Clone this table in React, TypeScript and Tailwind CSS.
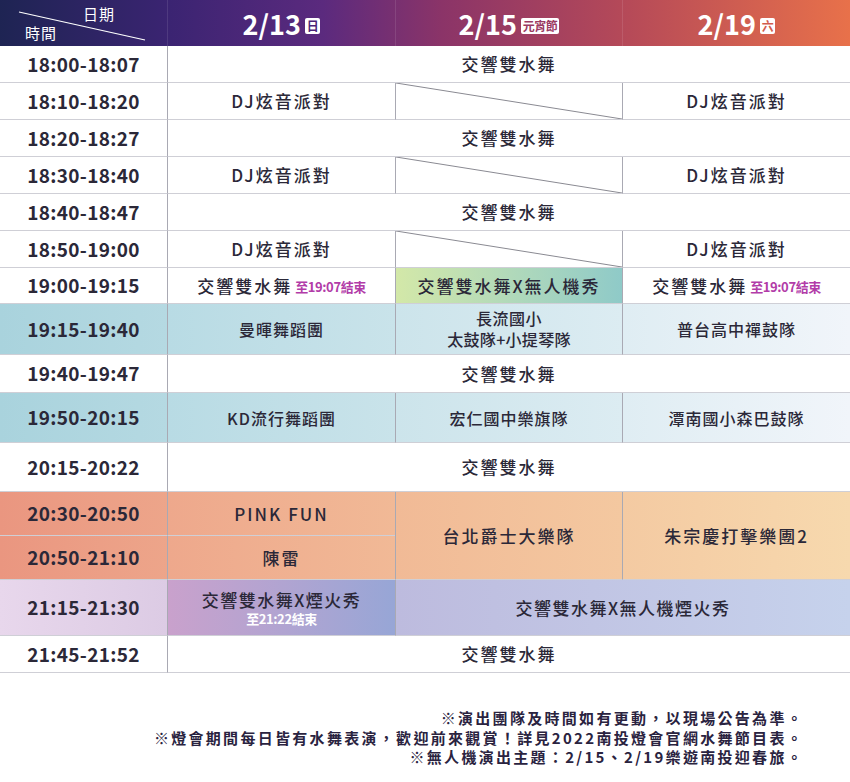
import React from "react";

const ink = "text-[#2b2838]";

function Diagonal() {
  return (
    <svg className="absolute inset-0 h-full w-full" viewBox="0 0 100 100" preserveAspectRatio="none">
      <line x1="0" y1="0" x2="100" y2="100" stroke="#8a8a92" strokeWidth="1" vectorEffect="non-scaling-stroke" />
    </svg>
  );
}

function Time({ t, bg = "" }: { t: string; bg?: string }) {
  return (
    <div className={`flex items-center justify-center border-b border-[#cfcfd6] text-[19px] font-bold tracking-[0.3px] ${ink} ${bg}`}>
      {t}
    </div>
  );
}

function Cell({
  children,
  span = "",
  bg = "",
  size = "show",
}: {
  children?: React.ReactNode;
  span?: string;
  bg?: string;
  size?: "show" | "name";
}) {
  const text = size === "show" ? "text-[17px] tracking-[2px]" : "text-[16px] tracking-[1px]";
  return (
    <div
      className={`relative flex flex-col items-center justify-center border-b border-l border-b-[#cfcfd6] border-l-[#a9a9b3] font-medium leading-[20px] ${text} ${ink} ${span} ${bg}`}
    >
      {children}
    </div>
  );
}

function Water() {
  return <Cell span="col-span-3">交響雙水舞</Cell>;
}

function DjRow({ t }: { t: string }) {
  return (
    <>
      <Time t={t} />
      <Cell>DJ炫音派對</Cell>
      <Cell>
        <Diagonal />
      </Cell>
      <Cell>DJ炫音派對</Cell>
    </>
  );
}

function Until({ text }: { text: string }) {
  return (
    <div className="flex items-center">
      <span>交響雙水舞</span>
      <span className="ml-[3px] mt-[3px] text-[13px] font-bold tracking-[-0.4px] text-[#b23ca8]">{text}</span>
    </div>
  );
}

function DateHead({ d, badge, color }: { d: string; badge: string; color: string }) {
  return (
    <div className="flex items-center justify-center border-l border-white/10">
      <span className="text-[27px] font-bold leading-none text-white">{d}</span>
      <span
        className={`ml-[4px] mt-[5px] rounded-[2px] bg-white px-[2px] py-[1px] text-[12px] font-bold leading-[14px] tracking-[-0.5px] ${color}`}
      >
        {badge}
      </span>
    </div>
  );
}

export default function App() {
  const blue = [
    "bg-gradient-to-r from-[#a9d3dd] to-[#b5d9e2]",
    "bg-gradient-to-r from-[#b8dbe4] to-[#c9e3ea]",
    "bg-gradient-to-r from-[#cce4eb] to-[#dcecf2]",
    "bg-gradient-to-r from-[#dfedf3] to-[#f1f5fa]",
  ];
  const orange = [
    "bg-gradient-to-r from-[#ea9680] to-[#eda58a]",
    "bg-gradient-to-r from-[#eea88c] to-[#f1b996]",
    "bg-gradient-to-r from-[#f1ba96] to-[#f4c8a0]",
    "bg-gradient-to-r from-[#f4caa2] to-[#f7d9ae]",
  ];

  return (
    <div className="min-h-[782px] w-[850px] bg-white font-['Noto_Sans_CJK_TC','Noto_Sans',sans-serif]">
      {/* header */}
      <div className="grid h-[46px] grid-cols-[167px_228px_227px_228px] bg-[linear-gradient(90deg,#1e2453_0%,#3b2472_20%,#5b2a7e_38%,#8b3468_52%,#b64a58_74%,#e8714a_100%)]">
        <div className="relative flex flex-col justify-between py-[5px] text-[15px] leading-[17px] text-white">
          <svg className="absolute inset-0" width="167" height="46">
            <line x1="19" y1="12" x2="145" y2="40" stroke="#ffffff" strokeWidth="1.2" />
          </svg>
          <span className="pl-[83px] tracking-[1px]">日期</span>
          <span className="pl-[25px] tracking-[1px]">時間</span>
        </div>
        <DateHead d="2/13" badge="日" color="text-[#4a2478]" />
        <DateHead d="2/15" badge="元宵節" color="text-[#9a3a62]" />
        <DateHead d="2/19" badge="六" color="text-[#d25c4c]" />
      </div>

      {/* body */}
      <div className="grid grid-cols-[167px_228px_227px_228px] grid-rows-[37px_37px_37px_37px_37px_37px_36px_51px_38px_50px_49px_44px_44px_56px_37px]">
        <Time t="18:00-18:07" />
        <Water />
        <DjRow t="18:10-18:20" />
        <Time t="18:20-18:27" />
        <Water />
        <DjRow t="18:30-18:40" />
        <Time t="18:40-18:47" />
        <Water />
        <DjRow t="18:50-19:00" />

        <Time t="19:00-19:15" />
        <Cell>
          <Until text="至19:07結束" />
        </Cell>
        <Cell bg="bg-gradient-to-r from-[#d3e8a8] to-[#8fcac8]">交響雙水舞X無人機秀</Cell>
        <Cell>
          <Until text="至19:07結束" />
        </Cell>

        <Time t="19:15-19:40" bg={blue[0]} />
        <Cell size="name" bg={blue[1]}>曼暉舞蹈團</Cell>
        <Cell size="name" bg={blue[2]}>
          <span className="leading-[21px] tracking-[0.5px]">長流國小</span>
          <span className="leading-[21px] tracking-[0.3px]">太鼓隊+小提琴隊</span>
        </Cell>
        <Cell size="name" bg={blue[3]}>普台高中禪鼓隊</Cell>

        <Time t="19:40-19:47" />
        <Water />

        <Time t="19:50-20:15" bg={blue[0]} />
        <Cell size="name" bg={blue[1]}>KD流行舞蹈團</Cell>
        <Cell size="name" bg={blue[2]}>宏仁國中樂旗隊</Cell>
        <Cell size="name" bg={blue[3]}>潭南國小森巴鼓隊</Cell>

        <Time t="20:15-20:22" />
        <Water />

        <Time t="20:30-20:50" bg={orange[0]} />
        <Cell bg={orange[1]}>PINK FUN</Cell>
        <Cell span="row-span-2" bg={orange[2]}>台北爵士大樂隊</Cell>
        <Cell span="row-span-2" bg={orange[3]}>朱宗慶打擊樂團2</Cell>
        <Time t="20:50-21:10" bg={orange[0]} />
        <Cell bg={orange[1]}>陳雷</Cell>

        <Time t="21:15-21:30" bg="bg-gradient-to-r from-[#e8d7ec] to-[#dccbe4]" />
        <Cell bg="bg-gradient-to-r from-[#c9a1cc] to-[#97a6d6]">
          <span className="leading-[22px] tracking-[1.5px]">交響雙水舞X煙火秀</span>
          <span className="text-[13px] font-bold leading-[15px] tracking-[-0.4px] text-white">至21:22結束</span>
        </Cell>
        <Cell span="col-span-2" bg="bg-gradient-to-r from-[#bdbbde] to-[#c6d2ec]">
          <span className="tracking-[1.5px]">交響雙水舞X無人機煙火秀</span>
        </Cell>

        <Time t="21:45-21:52" />
        <Water />
      </div>

      {/* notes */}
      <div className="mt-[35px] pr-[46px] text-right text-[15px] font-bold leading-[19.5px] tracking-[2.3px] text-[#2a2340]">
        <p>※演出團隊及時間如有更動，以現場公告為準。</p>
        <p>※燈會期間每日皆有水舞表演，歡迎前來觀賞！詳見2022南投燈會官網水舞節目表。</p>
        <p>※無人機演出主題：2/15、2/19樂遊南投迎春旅。</p>
      </div>
    </div>
  );
}
